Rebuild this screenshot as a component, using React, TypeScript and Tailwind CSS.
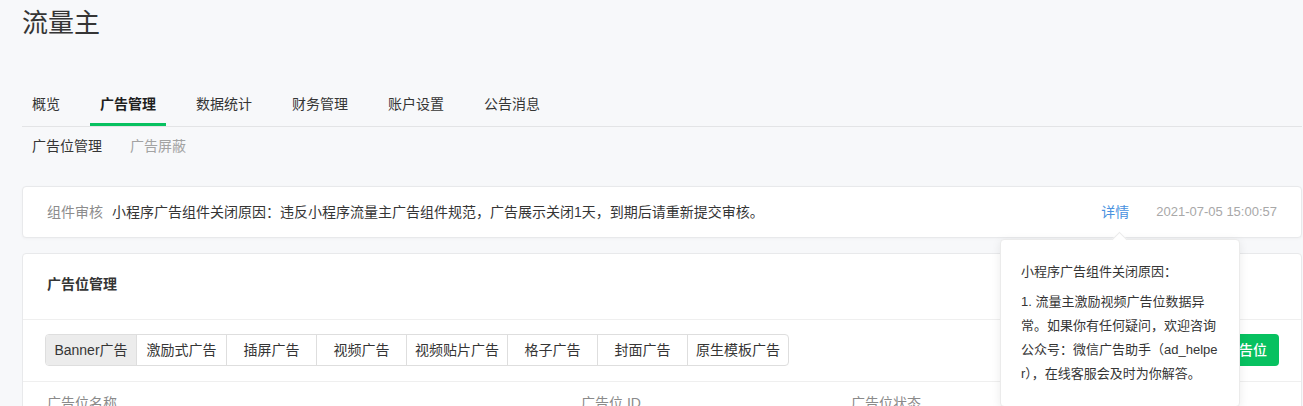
const font = "font-['Liberation_Sans','Noto_Sans_CJK_SC',sans-serif]"

const mainTabs = ["概览", "广告管理", "数据统计", "财务管理", "账户设置", "公告消息"]
const adTypes = ["Banner广告", "激励式广告", "插屏广告", "视频广告", "视频贴片广告", "格子广告", "封面广告", "原生模板广告"]

export default function App() {
  return (
    <div className={`relative min-h-screen bg-[#f7f8fa] text-[#353535] overflow-hidden ${font}`}>
      <div className="ml-[22px] w-[1280px] pt-[5px]">
        {/* Title */}
        <h1 className="text-[26px] leading-[36px] font-normal">流量主</h1>

        {/* Main tabs */}
        <div className="mt-[44px] flex gap-[20px] border-b border-[#e3e4e6]">
          {mainTabs.map((t, i) => (
            <div
              key={t}
              className={
                i === 1
                  ? "h-[41px] px-[10px] border-b-[3px] border-[#07c160] text-[14px] leading-[38px] font-bold text-[#1f1f1f]"
                  : "h-[41px] px-[10px] border-b-[3px] border-transparent text-[14px] leading-[38px]"
              }
            >
              {t}
            </div>
          ))}
        </div>

        {/* Sub tabs */}
        <div className="flex gap-[28px] px-[10px] text-[14px] leading-[38px]">
          <span>广告位管理</span>
          <span className="text-[#a3a3a3]">广告屏蔽</span>
        </div>

        {/* Notice */}
        <div className="mt-[21px] h-[52px] flex items-center px-[24px] bg-white border border-[#e8e9eb] rounded-[4px] shadow-[0_1px_3px_rgba(0,0,0,0.03)] text-[14px] leading-[20px]">
          <span className="text-[#8c8c8c] mr-[9px]">组件审核</span>
          <span>小程序广告组件关闭原因：违反小程序流量主广告组件规范，广告展示关闭1天，到期后请重新提交审核。</span>
          <span className="ml-auto text-[#4a92e0]">详情</span>
          <span className="ml-[27px] text-[13px] text-[#a8a8a8]">2021-07-05 15:00:57</span>
        </div>

        {/* Ad slot card */}
        <div className="mt-[15px] bg-white border border-[#e8e9eb] rounded-[4px]">
          <div className="h-[66px] border-b border-[#efefef] px-[24px] pt-[20px] text-[14px] leading-[20px] font-bold">
            广告位管理
          </div>

          <div className="flex items-center px-[22px] pt-[14px] pb-[15px] border-b border-[#efefef]">
            <div className="inline-flex h-[32px] border border-[#dedede] rounded-[4px] overflow-hidden text-[14px]">
              {adTypes.map((t, i) => (
                <div
                  key={t}
                  className={
                    i === 0
                      ? "min-w-[90px] px-[8px] flex items-center justify-center bg-[#ececec]"
                      : "min-w-[90px] px-[8px] flex items-center justify-center border-l border-[#dedede]"
                  }
                >
                  {t}
                </div>
              ))}
            </div>
            <button className="ml-auto h-[32px] px-[12px] rounded-[4px] bg-[#07c160] text-white text-[14px] font-medium">
              新建广告位
            </button>
          </div>

          <div className="flex px-[24px] pt-[11px] pb-[12px] text-[14px] leading-[20px] text-[#8a8a8a]">
            <div className="w-[534px]">广告位名称</div>
            <div className="w-[270px]">广告位 ID</div>
            <div className="w-[265px]">广告位状态</div>
            <div>操作</div>
          </div>
        </div>
      </div>

      {/* Popover under 详情 */}
      <div className="absolute left-[1000px] top-[239px] w-[240px] bg-white border border-[#ebebeb] rounded-[4px] shadow-[0_2px_10px_rgba(0,0,0,0.08)] px-[20px] pt-[20px] pb-[20px] text-[13px] leading-[24px] text-[#353535]">
        <div className="absolute -top-[6px] left-[113px] w-[11px] h-[11px] rotate-45 bg-white border-t border-l border-[#ebebeb]" />
        <p className="whitespace-nowrap">小程序广告组件关闭原因：</p>
        <p className="mt-[6px] whitespace-nowrap">
          1. 流量主激励视频广告位数据异
          <br />
          常。如果你有任何疑问，欢迎咨询
          <br />
          公众号：微信广告助手（ad_helpe
          <br />
          r），在线客服会及时为你解答。
        </p>
      </div>
    </div>
  )
}
